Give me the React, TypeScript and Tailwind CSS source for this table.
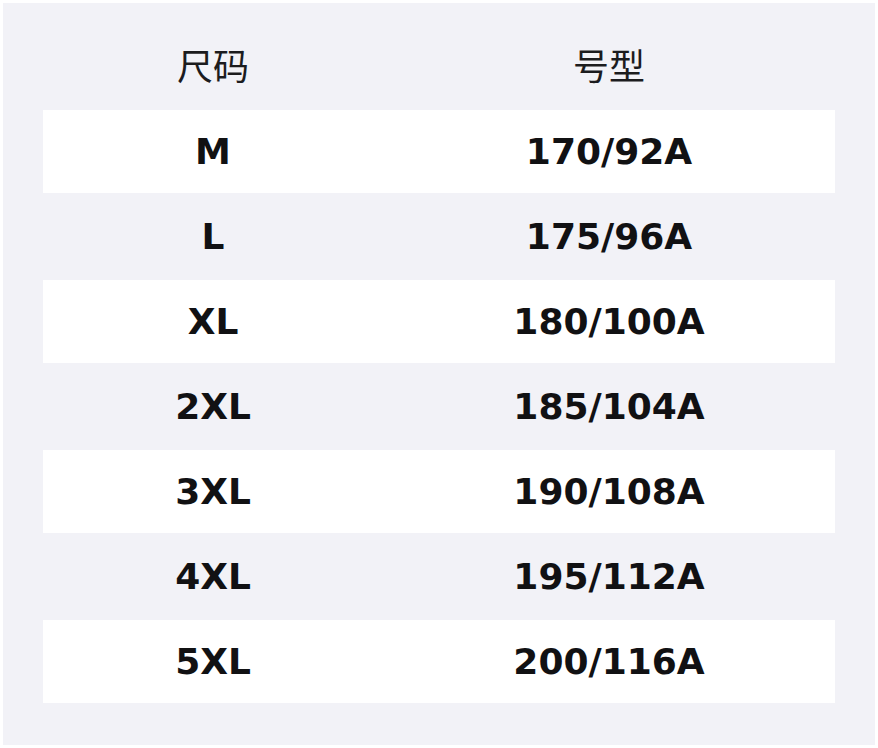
const ROWS = [
  { size: 'M', fit: '170/92A' },
  { size: 'L', fit: '175/96A' },
  { size: 'XL', fit: '180/100A' },
  { size: '2XL', fit: '185/104A' },
  { size: '3XL', fit: '190/108A' },
  { size: '4XL', fit: '195/112A' },
  { size: '5XL', fit: '200/116A' },
]

export default function App() {
  return (
    <div className="w-[878px] h-[748px] bg-white p-[3px]">
      <div className="h-full bg-[#f2f2f7] px-[40px]">
        <div className="flex h-[107px] items-center pt-[14px] text-[36px] text-[#1c1c1e] [font-family:'Noto_Sans_CJK_SC',sans-serif]">
          <div className="w-[340px] text-center">尺码</div>
          <div className="flex-1 text-center">号型</div>
        </div>
        <div className="[font-family:'DejaVu_Sans',sans-serif] text-[36px] font-bold text-[#111113]">
          {ROWS.map((row, i) => (
            <div
              key={row.size}
              className={`flex h-[85px] items-center border-b-2 border-[#f2f2f7] ${i % 2 === 0 ? 'bg-white' : ''}`}
            >
              <div className="w-[340px] text-center">{row.size}</div>
              <div className="flex-1 text-center">{row.fit}</div>
            </div>
          ))}
        </div>
      </div>
    </div>
  )
}
